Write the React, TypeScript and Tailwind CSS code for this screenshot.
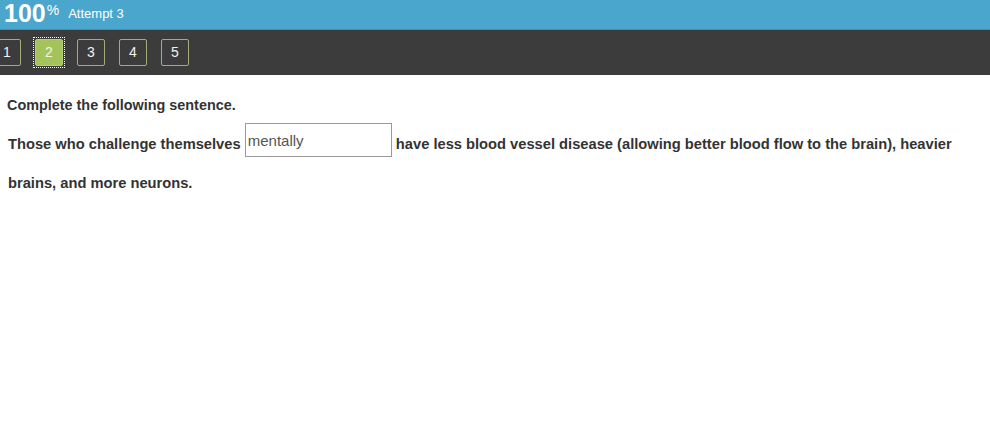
import React from "react";

const pages = [1, 2, 3, 4, 5];

const App: React.FC = () => {
  const current = 2;

  return (
    <div className="w-[990px] h-[436px] bg-white overflow-hidden font-['Liberation_Sans',Arial,sans-serif]">
      {/* score header */}
      <header className="h-[30px] bg-[#4aa6cc] border-b border-[#3a8fb3] flex items-start pl-[4px] text-white">
        <span className="text-[25px] font-bold leading-[28px] mt-[-1px]">100</span>
        <span className="text-[14px] leading-[16px] mt-[2px] ml-[1px]">%</span>
        <span className="text-[13px] leading-[16px] ml-[9px] mt-[6px]">Attempt 3</span>
      </header>

      {/* question nav */}
      <nav className="h-[45px] bg-[#3c3c3c] flex items-center gap-[10px] -ml-[9px]">
        {pages.map((p) => (
          <div
            key={p}
            className={
              p === current
                ? "p-[1px] border border-dotted border-white"
                : "p-[1px] border border-transparent"
            }
          >
            <button
              className={
                p === current
                  ? "w-[28px] h-[27px] rounded-[2px] bg-[#a4c35b] border border-[#b7cf7a] text-[#f2f7e4] text-[14px] flex items-center justify-center"
                  : "w-[28px] h-[27px] rounded-[2px] bg-[#3c3c3c] border border-[#a7ab7a] text-[#f1f1f1] text-[14px] flex items-center justify-center"
              }
            >
              {p}
            </button>
          </div>
        ))}
      </nav>

      {/* question body */}
      <main className="pl-[7px] pt-[22px] text-[#333]">
        <p className="text-[14.4px] font-bold leading-[17px]">Complete the following sentence.</p>
        <p className="text-[14.7px] font-bold leading-[39px] mt-[11px] pl-[1px] pr-[30px]">
          Those who challenge themselves{" "}
          <input
            readOnly
            value="mentally"
            className="relative -top-[5px] w-[147px] h-[34px] border border-[#9a9a9a] px-[2px] pt-[1px] text-[15px] font-normal text-[#555] align-middle outline-none"
          />{" "}
          have less blood vessel disease (allowing better blood flow to the brain), heavier brains, and more neurons.
        </p>
      </main>
    </div>
  );
};

export default App;
